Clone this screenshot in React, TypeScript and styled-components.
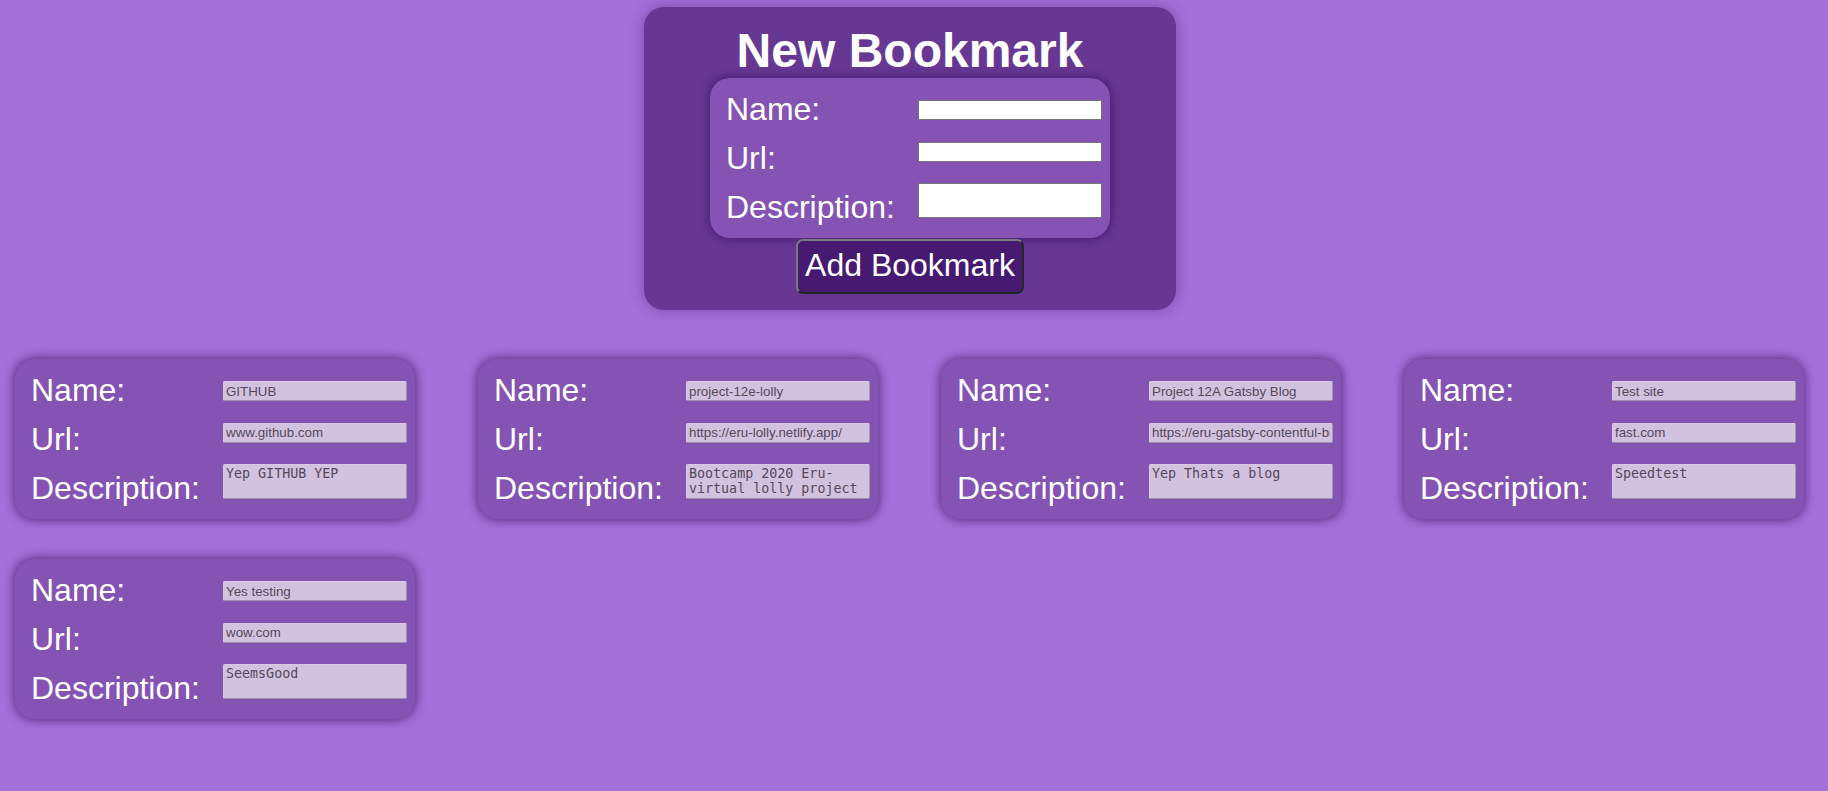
import React from "react";
import styled, { createGlobalStyle, css } from "styled-components";

const GlobalStyle = createGlobalStyle`
  html, body {
    margin: 0;
    padding: 0;
    background: #a470d9;
  }
  body {
    font-family: "Liberation Sans", Arial, sans-serif;
    min-height: 791px;
  }
`;

const Page = styled.div`
  min-height: 791px;
  box-sizing: border-box;
  padding: 7px 8px 0 0;
  display: flex;
  flex-direction: column;
`;

const Panel = styled.section`
  align-self: center;
  width: 532px;
  box-sizing: border-box;
  padding: 17px 0 16px;
  background: #663894;
  border-radius: 20px;
  display: flex;
  flex-direction: column;
  align-items: center;
  box-shadow: 0 0 14px rgba(70, 25, 110, 0.45);
`;

const Title = styled.h1`
  margin: 0;
  font-size: 48px;
  font-weight: 700;
  line-height: 54px;
  color: #ffffff;
`;

const Card = styled.div`
  width: 400px;
  height: 160px;
  box-sizing: border-box;
  padding-left: 16px;
  border-radius: 20px;
  background: #8553b3;
  display: grid;
  grid-template-columns: 192px 184px;
  box-shadow: 0 0 10px 2px rgba(55, 15, 90, 0.6);
`;

const LabelColumn = styled.div`
  display: flex;
  flex-direction: column;
  gap: 12px;
  padding-top: 13px;
`;

const Label = styled.label`
  font-size: 32px;
  line-height: 37px;
  color: #ffffff;
  white-space: nowrap;
`;

const FieldColumn = styled.div`
  display: flex;
  flex-direction: column;
  gap: 21.5px;
  padding-top: 22px;
`;

type Variant = "blank" | "saved";

const fieldLook = css<{ $variant: Variant }>`
  width: 184px;
  box-sizing: border-box;
  margin: 0;
  font-size: 13.33px;
  outline: none;
  ${(p) =>
    p.$variant === "blank"
      ? css`
          background: #ffffff;
          color: #000000;
          border: 1px solid #767676;
          border-radius: 0;
        `
      : css`
          background: #d3c2df;
          color: #54495c;
          border: 1px solid;
          border-color: #d8cae3 #a398ad #a094aa #d8cae3;
          border-radius: 2px;
        `}
`;

const TextInput = styled.input<{ $variant: Variant }>`
  ${fieldLook}
  height: 20px;
  padding: 1px 2px;
  font-family: "Liberation Sans", Arial, sans-serif;
`;

const TextArea = styled.textarea<{ $variant: Variant }>`
  ${fieldLook}
  height: 35px;
  padding: 1px 2px;
  font-family: "DejaVu Sans Mono", "Liberation Mono", monospace;
  line-height: 15px;
  resize: none;
  overflow: hidden;
`;

const AddButton = styled.button`
  margin-top: 1px;
  padding: 6px 7px 8px;
  font-family: "Liberation Sans", Arial, sans-serif;
  font-size: 32px;
  line-height: 37px;
  color: #ffffff;
  background: #461a70;
  border: 2px solid;
  border-color: #7a7a7a #262626 #262626 #7a7a7a;
  border-radius: 7px;
  cursor: pointer;
`;

const CardGrid = styled.div`
  display: grid;
  grid-template-columns: repeat(4, 400px);
  column-gap: 63px;
  row-gap: 40px;
  margin: 49px 0 0 15px;
`;

type Bookmark = { name: string; url: string; description: string };

const bookmarks: Bookmark[] = [
  { name: "GITHUB", url: "www.github.com", description: "Yep GITHUB YEP" },
  {
    name: "project-12e-lolly",
    url: "https://eru-lolly.netlify.app/",
    description: "Bootcamp 2020 Eru-virtual lolly project",
  },
  {
    name: "Project 12A Gatsby Blog",
    url: "https://eru-gatsby-contentful-blog.netlify.app/",
    description: "Yep Thats a blog",
  },
  { name: "Test site", url: "fast.com", description: "Speedtest" },
  { name: "Yes testing", url: "wow.com", description: "SeemsGood" },
];

const Fields: React.FC<{ variant: Variant; data?: Bookmark }> = ({ variant, data }) => {
  const readOnly = variant === "saved";
  return (
    <Card>
      <LabelColumn>
        <Label>Name:</Label>
        <Label>Url:</Label>
        <Label>Description:</Label>
      </LabelColumn>
      <FieldColumn>
        <TextInput $variant={variant} readOnly={readOnly} defaultValue={data?.name ?? ""} />
        <TextInput $variant={variant} readOnly={readOnly} defaultValue={data?.url ?? ""} />
        <TextArea $variant={variant} readOnly={readOnly} defaultValue={data?.description ?? ""} />
      </FieldColumn>
    </Card>
  );
};

export default function App() {
  return (
    <>
      <GlobalStyle />
      <Page>
        <Panel>
          <Title>New Bookmark</Title>
          <Fields variant="blank" />
          <AddButton type="button">Add Bookmark</AddButton>
        </Panel>
        <CardGrid>
          {bookmarks.map((b, i) => (
            <Fields key={i} variant="saved" data={b} />
          ))}
        </CardGrid>
      </Page>
    </>
  );
}
